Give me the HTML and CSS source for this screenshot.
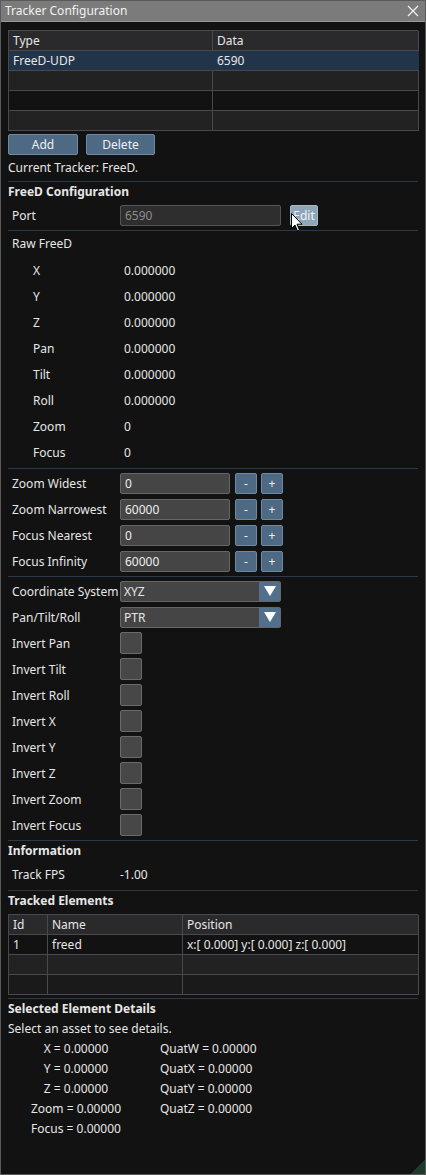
FILE: index.html
```html
<!DOCTYPE html>
<html>
<head>
<meta charset="utf-8">
<link rel="stylesheet" href="styles.css">
</head>
<body>
<div class="window">
  <div class="titlebar">
    <span class="title">Tracker Configuration</span>
    <svg class="close" width="12" height="12" viewBox="0 0 12 12"><path d="M1 1 L11 11 M11 1 L1 11" stroke="#f2f2f2" stroke-width="1.2" fill="none"/></svg>
  </div>
  <div class="content">
    <div class="grid tracker-table">
      <div class="cell head">Type</div><div class="cell head">Data</div>
      <div class="cell sel">FreeD-UDP</div><div class="cell sel">6590</div>
      <div class="cell alt"></div><div class="cell alt"></div>
      <div class="cell"></div><div class="cell"></div>
      <div class="cell alt"></div><div class="cell alt"></div>
    </div>
    <div class="btnrow">
      <button class="btn add">Add</button>
      <button class="btn del">Delete</button>
    </div>
    <div class="line">Current Tracker: FreeD.</div>
    <div class="sep"></div>
    <div class="section">FreeD Configuration</div>
    <div class="row port-row">
      <span class="label">Port</span>
      <span class="input disabled wide">6590</span>
      <span class="edit-wrap">
        <button class="btn edit">Edit</button>
        <svg class="cursor" width="12" height="19" viewBox="0 0 12 19"><path d="M0.5 0.5 L0.5 15.5 L4 12 L6.5 18 L8.5 17 L6 11.2 L11 11.2 Z" fill="#ffffff" stroke="#000000" stroke-width="1"/></svg>
      </span>
    </div>
    <div class="sep s4"></div>
    <div class="subhead">Raw FreeD</div>
    <div class="raw">
      <div class="rrow"><span class="rlabel">X</span><span>0.000000</span></div>
      <div class="rrow"><span class="rlabel">Y</span><span>0.000000</span></div>
      <div class="rrow"><span class="rlabel">Z</span><span>0.000000</span></div>
      <div class="rrow"><span class="rlabel">Pan</span><span>0.000000</span></div>
      <div class="rrow"><span class="rlabel">Tilt</span><span>0.000000</span></div>
      <div class="rrow"><span class="rlabel">Roll</span><span>0.000000</span></div>
      <div class="rrow"><span class="rlabel">Zoom</span><span>0</span></div>
      <div class="rrow"><span class="rlabel">Focus</span><span>0</span></div>
    </div>
    <div class="sep s3"></div>
    <div class="rows">
      <div class="row"><span class="label">Zoom Widest</span><span class="input spin">0</span><button class="btn sbtn">-</button><button class="btn sbtn">+</button></div>
      <div class="row"><span class="label">Zoom Narrowest</span><span class="input spin">60000</span><button class="btn sbtn">-</button><button class="btn sbtn">+</button></div>
      <div class="row"><span class="label">Focus Nearest</span><span class="input spin">0</span><button class="btn sbtn">-</button><button class="btn sbtn">+</button></div>
      <div class="row"><span class="label">Focus Infinity</span><span class="input spin">60000</span><button class="btn sbtn">-</button><button class="btn sbtn">+</button></div>
    </div>
    <div class="sep s4"></div>
    <div class="rows">
      <div class="row"><span class="label">Coordinate System</span><span class="combo"><span class="ctext">XYZ</span><span class="carrow"><svg width="12" height="10" viewBox="0 0 12 10"><path d="M0 0 H12 L6 10 Z" fill="#ffffff"/></svg></span></span></div>
      <div class="row"><span class="label">Pan/Tilt/Roll</span><span class="combo"><span class="ctext">PTR</span><span class="carrow"><svg width="12" height="10" viewBox="0 0 12 10"><path d="M0 0 H12 L6 10 Z" fill="#ffffff"/></svg></span></span></div>
      <div class="row"><span class="label">Invert Pan</span><span class="check"></span></div>
      <div class="row"><span class="label">Invert Tilt</span><span class="check"></span></div>
      <div class="row"><span class="label">Invert Roll</span><span class="check"></span></div>
      <div class="row"><span class="label">Invert X</span><span class="check"></span></div>
      <div class="row"><span class="label">Invert Y</span><span class="check"></span></div>
      <div class="row"><span class="label">Invert Z</span><span class="check"></span></div>
      <div class="row"><span class="label">Invert Zoom</span><span class="check"></span></div>
      <div class="row"><span class="label">Invert Focus</span><span class="check"></span></div>
    </div>
    <div class="sep s4"></div>
    <div class="section">Information</div>
    <div class="fps-row"><span class="label">Track FPS</span><span>-1.00</span></div>
    <div class="sep s6"></div>
    <div class="section">Tracked Elements</div>
    <div class="grid elem-table">
      <div class="cell head">Id</div><div class="cell head">Name</div><div class="cell head">Position</div>
      <div class="cell">1</div><div class="cell">freed</div><div class="cell">x:[ 0.000] y:[ 0.000] z:[ 0.000]</div>
      <div class="cell alt"></div><div class="cell alt"></div><div class="cell alt"></div>
      <div class="cell dim"></div><div class="cell dim"></div><div class="cell dim"></div>
    </div>
    <div class="sep s3"></div>
    <div class="section">Selected Element Details</div>
    <div class="line tight">Select an asset to see details.</div>
    <div class="details">
      <span class="dl">X = 0.00000</span><span class="dr">QuatW = 0.00000</span>
      <span class="dl">Y = 0.00000</span><span class="dr">QuatX = 0.00000</span>
      <span class="dl">Z = 0.00000</span><span class="dr">QuatY = 0.00000</span>
      <span class="dl">Zoom = 0.00000</span><span class="dr">QuatZ = 0.00000</span>
      <span class="dl">Focus = 0.00000</span><span class="dr"></span>
    </div>
  </div>
  <div class="grip"></div>
</div>
</body>
</html>
```

FILE: styles.css
```css
* { box-sizing: border-box; }
html, body { margin: 0; padding: 0; background: #121212; }
body {
  font-family: "Noto Sans", "Open Sans", sans-serif;
  font-size: 12px;
  color: #e6e6e6;
}
.window {
  position: relative;
  width: 426px;
  height: 1175px;
  border: 1px solid #5a5a5a;
  background: #121212;
  overflow: hidden;
}
.titlebar {
  height: 21px;
  background: #7b7b7b;
  border-bottom: 1px solid #9a9a9a;
  display: flex;
  align-items: center;
  justify-content: space-between;
  padding: 0 6px 0 4px;
}
.title { font-size: 12px; color: #f2f2f2; line-height: 20px; }
.close { display: block; }
.content { padding: 0 7px; }

.grid { display: grid; border-top: 1px solid #48484e; border-left: 1px solid #48484e; }
.tracker-table { margin-top: 8px; grid-template-columns: 204px 206px; }
.elem-table { margin-top: 4px; grid-template-columns: 39px 135px 236px; }
.cell {
  height: 20px;
  line-height: 19px;
  padding-left: 4px;
  border-right: 1px solid #48484e;
  border-bottom: 1px solid #48484e;
  white-space: nowrap;
  overflow: hidden;
}
.cell.head { background: #2a2a2c; }
.cell.sel { background: #22344a; border-right-color: #22344a; }
.cell.alt { background: #222222; }
.cell.dim { background: #1a1a1a; }

.btnrow { display: flex; gap: 8px; margin-top: 3px; }
.btn {
  font-family: inherit;
  font-size: 12px;
  color: #f0f0f0;
  background: #4d6983;
  border: 1px solid #6e8aa3;
  border-radius: 2px;
  height: 21px;
  padding: 0;
  line-height: 19px;
  cursor: default;
}
.btn.add { width: 70px; }
.btn.del { width: 69px; }

.line { margin-top: 3px; line-height: 20px; }
.line.tight { margin-top: 1px; }
.sep { height: 1px; background: #2a3a4b; margin-top: 3px; }
.sep.s3 { margin-top: 3px; }
.sep.s4 { margin-top: 4px; }
.sep.s6 { margin-top: 6px; }
.section { font-weight: bold; line-height: 18px; margin-top: 1px; }

.row { display: flex; align-items: center; height: 22px; }
.label { width: 112px; padding-left: 4px; white-space: nowrap; flex: none; }
.port-row { margin-top: 3px; }
.input {
  height: 21px;
  line-height: 19px;
  padding-left: 4px;
  border: 1px solid #666666;
  border-radius: 2px;
  background: #454545;
  color: #eeeeee;
}
.input.disabled { background: #2e2e2e; border-color: #555555; color: #8c8c8c; }
.input.wide { width: 161px; }
.edit-wrap { position: relative; margin-left: 9px; display: flex; }
.btn.edit { width: 28px; background: #8fa6ba; border-color: #a3b7c7; color: #eef2f5; }
.cursor { position: absolute; left: 1px; top: 8px; }

.subhead { margin-top: 4px; line-height: 18px; padding-left: 4px; }
.raw { margin-top: 4px; }
.rrow { display: flex; align-items: center; height: 26px; }
.rlabel { width: 116px; padding-left: 25px; }

.rows { display: flex; flex-direction: column; gap: 4px; margin-top: 3px; }
.input.spin { width: 110px; }
.sbtn { width: 22px; margin-left: 4px; }
.sbtn:first-of-type { margin-left: 5px; }

.combo {
  display: flex;
  width: 161px;
  height: 21px;
  border: 1px solid #666666;
  border-radius: 2px;
  background: #454545;
  overflow: hidden;
}
.ctext { flex: 1; padding-left: 3px; line-height: 19px; }
.carrow {
  width: 21px;
  background: #52708b;
  display: flex;
  align-items: center;
  justify-content: center;
}
.carrow svg { display: block; }
.check {
  width: 22px;
  height: 22px;
  border: 1px solid #6a6a6a;
  border-radius: 2px;
  background: #474747;
}

.fps-row { display: flex; align-items: center; height: 20px; margin-top: 4px; }

.details {
  display: grid;
  grid-template-columns: 136px 1fr;
  line-height: 20px;
}
.dl { text-align: center; }
.dr { padding-left: 16px; }

.grip {
  position: absolute;
  right: 0;
  bottom: 0;
  width: 14px;
  height: 14px;
  background: linear-gradient(135deg, transparent 50%, #1d3a2c 50%);
}
```
